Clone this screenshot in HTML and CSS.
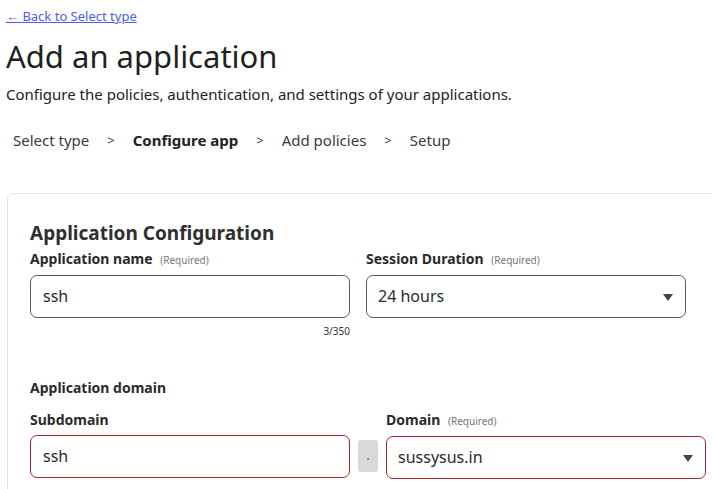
FILE: index.html
```html
<!DOCTYPE html>
<html>
<head>
<meta charset="utf-8">
<link rel="stylesheet" href="styles.css">
</head>
<body>
<div class="page">
  <a class="back" href="#">← Back to Select type</a>
  <h1 class="title">Add an application</h1>
  <p class="desc">Configure the policies, authentication, and settings of your applications.</p>
  <nav class="steps">
    <span class="step">Select type</span>
    <span class="sep">&gt;</span>
    <span class="step current">Configure app</span>
    <span class="sep">&gt;</span>
    <span class="step">Add policies</span>
    <span class="sep">&gt;</span>
    <span class="step">Setup</span>
  </nav>
  <section class="card">
    <h2 class="card-title">Application Configuration</h2>
    <div class="row">
      <div class="field">
        <label class="label">Application name <span class="req">(Required)</span></label>
        <div class="input">ssh</div>
        <div class="counter">3/350</div>
      </div>
      <div class="field">
        <label class="label">Session Duration <span class="req">(Required)</span></label>
        <div class="input select">24 hours<span class="caret"></span></div>
      </div>
    </div>
    <h3 class="group">Application domain</h3>
    <div class="row domain-row">
      <div class="field">
        <label class="label">Subdomain</label>
        <div class="input error">ssh</div>
      </div>
      <div class="dot">.</div>
      <div class="field">
        <label class="label">Domain <span class="req">(Required)</span></label>
        <div class="input select error">sussysus.in<span class="caret"></span></div>
      </div>
    </div>
  </section>
</div>
</body>
</html>
```
FILE: styles.css
```css
html, body {
  margin: 0;
  padding: 0;
  overflow: hidden;
  background: #fff;
}
body {
  font-family: "Noto Sans", "Open Sans", sans-serif;
  color: #2b2b2b;
}
.page {
  padding: 0 0 0 6px;
}
.back {
  display: inline-block;
  margin-top: 7px;
  font-size: 13px;
  line-height: 18px;
  color: #4a5cf3;
  text-decoration: underline;
}
.title {
  margin: 9px 0 0;
  font-size: 31px;
  font-weight: 400;
  line-height: 42px;
  color: #1f1f1f;
}
.desc {
  margin: 6px 0 0;
  font-size: 15px;
  line-height: 22px;
  color: #222;
}
.steps {
  display: flex;
  align-items: center;
  gap: 16px;
  margin: 24px 0 0 7px;
  font-size: 15px;
  line-height: 22px;
  color: #3a3a3a;
}
.step.current {
  font-weight: 700;
  color: #222;
}
.sep {
  font-size: 13px;
  padding: 0 2px;
}
.card {
  margin: 42px 0 0 1px;
  width: 760px;
  border: 1px solid #e0e0e0;
  border-radius: 7px;
  padding: 26px 0 20px 22px;
}
.card-title {
  margin: 0;
  font-size: 19px;
  line-height: 26px;
  font-weight: 700;
  color: #2f2f2f;
}
.row {
  display: flex;
  gap: 16px;
}
.field {
  width: 320px;
  display: flex;
  flex-direction: column;
}
.label {
  display: block;
  margin-top: 3px;
  font-size: 14px;
  line-height: 20px;
  font-weight: 700;
  color: #2b2b2b;
}
.req {
  font-size: 10px;
  font-weight: 400;
  color: #777;
  margin-left: 4px;
}
.input {
  position: relative;
  box-sizing: border-box;
  margin-top: 5px;
  height: 43px;
  border: 1px solid #5a5a5a;
  border-radius: 7px;
  padding: 0 12px;
  font-size: 16px;
  line-height: 41px;
  color: #2b2b2b;
}
.input.select {
  padding-left: 11px;
}
.input.error {
  border-color: #a8262c;
}
.caret {
  position: absolute;
  right: 12px;
  top: 18px;
  width: 0;
  height: 0;
  border-left: 5px solid transparent;
  border-right: 5px solid transparent;
  border-top: 7px solid #444;
}
.counter {
  align-self: flex-end;
  margin-top: 7px;
  font-size: 10px;
  line-height: 12px;
  color: #333;
}
.group {
  margin: 41px 0 0;
  font-size: 14px;
  line-height: 20px;
  font-weight: 700;
  color: #2b2b2b;
}
.domain-row {
  gap: 8px;
  margin-top: 9px;
}
.dot {
  align-self: flex-end;
  margin-bottom: 7px;
  width: 20px;
  height: 32px;
  background: #d9d9d9;
  border-radius: 3px;
  text-align: center;
  font-size: 12px;
  line-height: 32px;
  color: #555;
}
```
